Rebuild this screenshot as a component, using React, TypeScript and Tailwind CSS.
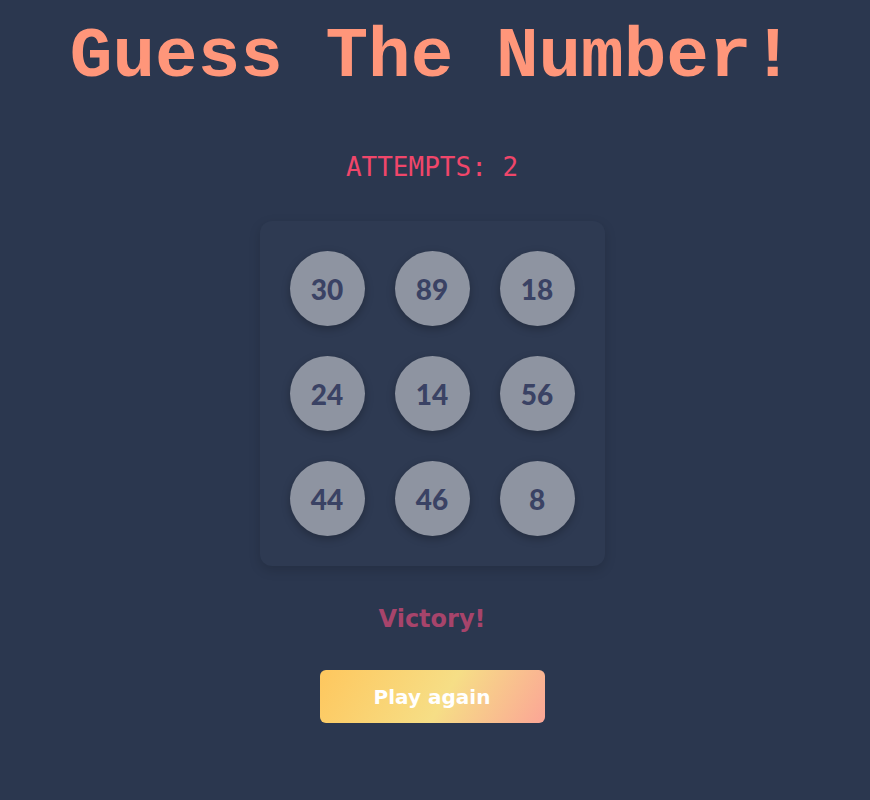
const numbers = [30, 89, 18, 24, 14, 56, 44, 46, 8];

export default function App() {
  return (
    <div className="flex min-h-[800px] w-full flex-col items-center bg-[#2b374f] pr-[6px]">
      <h1 className="mt-[17px] font-['Liberation_Mono','Courier_New',monospace] text-[71px] leading-[80px] font-bold text-[#ff967a]">
        Guess The Number!
      </h1>

      <p className="mt-[54px] font-['DejaVu_Sans_Mono',monospace] text-[26px] leading-[32px] text-[#f0466a]">
        ATTEMPTS: 2
      </p>

      <div className="mt-[38px] grid w-[345px] grid-cols-3 gap-[30px] rounded-xl bg-[#2e3a52] p-[30px] shadow-[0_4px_12px_rgba(0,0,0,0.15)]">
        {numbers.map((n) => (
          <button
            key={n}
            className="flex h-[75px] w-[75px] items-center justify-center rounded-full bg-[#8e94a1] font-['Lato','Noto_Sans',sans-serif] text-[28px] font-black text-[#3a4264] shadow-[0_3px_8px_rgba(0,0,0,0.25)]"
          >
            {n}
          </button>
        ))}
      </div>

      <p className="mt-[38px] font-['DejaVu_Sans',Verdana,sans-serif] text-[24px] leading-[30px] font-bold text-[#a7446b]">
        Victory!
      </p>

      <button className="mt-[36px] h-[53px] w-[225px] rounded-md bg-[linear-gradient(120deg,#fec75e_0%,#f6de86_55%,#fba596_100%)] font-['DejaVu_Sans',Verdana,sans-serif] text-[20px] font-bold text-white">
        Play again
      </button>
    </div>
  );
}
